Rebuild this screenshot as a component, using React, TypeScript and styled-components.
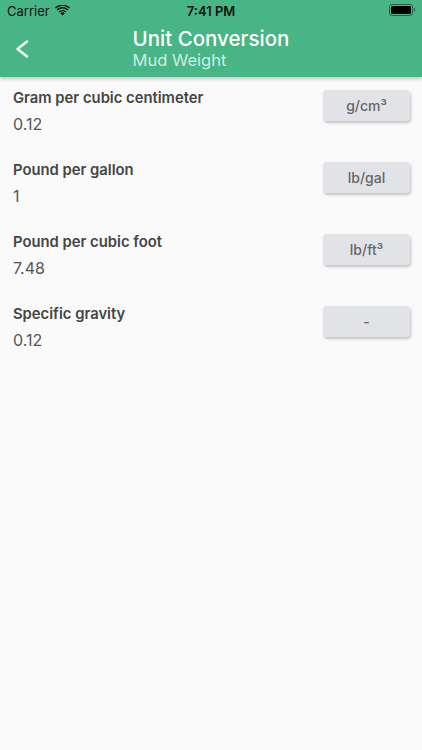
import styled, { createGlobalStyle } from "styled-components";

const GlobalStyle = createGlobalStyle`
  html, body {
    margin: 0;
    padding: 0;
    background: #fafafa;
  }
  body {
    font-family: Inter, "Noto Sans", sans-serif;
    -webkit-font-smoothing: antialiased;
  }
`;

const conversions = [
  { id: "gcc", label: "Gram per cubic centimeter", value: "0.12", unit: "g/cm³" },
  { id: "ppg", label: "Pound per gallon", value: "1", unit: "lb/gal" },
  { id: "pcf", label: "Pound per cubic foot", value: "7.48", unit: "lb/ft³" },
  { id: "sg", label: "Specific gravity", value: "0.12", unit: "-" },
];

const Screen = styled.div`
  width: 422px;
  min-height: 750px;
  background: #fafafa;
`;

const Header = styled.header`
  background: #47b585;
  box-shadow: 0 2px 4px rgba(0, 0, 0, 0.22);
  position: relative;
  z-index: 1;
`;

const StatusBar = styled.div`
  height: 20px;
  display: grid;
  grid-template-columns: 1fr auto 1fr;
  align-items: center;
  padding: 0 7px;
  color: #111;
  font-size: 13px;
`;

const Carrier = styled.div`
  display: flex;
  align-items: center;
  gap: 5px;
  padding-top: 1px;
`;

const Clock = styled.div`
  font-weight: 600;
  padding-top: 1px;
`;

const Battery = styled.div`
  justify-self: end;
  display: flex;
  align-items: center;
`;

const BatteryBody = styled.div`
  width: 20px;
  height: 8px;
  border: 1px solid rgba(0, 0, 0, 0.45);
  border-radius: 3px;
  padding: 1px;
  box-sizing: content-box;

  &::after {
    content: "";
    display: block;
    width: 100%;
    height: 100%;
    border-radius: 1.5px;
    background: #000;
  }
`;

const BatteryTip = styled.div`
  width: 1.5px;
  height: 4px;
  margin-left: 1px;
  border-radius: 0 1px 1px 0;
  background: rgba(0, 0, 0, 0.45);
`;

const NavBar = styled.div`
  height: 57px;
  display: grid;
  grid-template-columns: 56px 1fr 56px;
`;

const BackButton = styled.button`
  border: 0;
  background: transparent;
  padding: 0 0 0 14px;
  height: 57px;
  display: flex;
  align-items: center;
  cursor: pointer;
`;

const TitleBlock = styled.div`
  justify-self: center;
  display: flex;
  flex-direction: column;
  padding-top: 7px;
`;

const Title = styled.div`
  color: #fff;
  font-size: 20.5px;
  line-height: 24px;
  font-weight: 500;
`;

const Subtitle = styled.div`
  color: rgba(255, 255, 255, 0.75);
  font-size: 16.5px;
  line-height: 19px;
`;

const List = styled.div`
  padding: 12px 12px 0 13px;
`;

const Row = styled.div`
  height: 72px;
  display: flex;
  justify-content: space-between;
  align-items: flex-start;
`;

const RowText = styled.div`
  display: flex;
  flex-direction: column;
`;

const Label = styled.div`
  color: #454545;
  font-size: 14.8px;
  line-height: 18px;
  font-weight: 600;
`;

const Value = styled.div`
  margin-top: 7px;
  color: #555;
  font-size: 16px;
  line-height: 20px;
`;

const UnitButton = styled.button`
  margin-top: 1px;
  width: 87px;
  height: 31px;
  border: 0;
  border-radius: 4px;
  background: #e1e3e7;
  color: #666;
  font-family: Inter, "Noto Sans", sans-serif;
  font-size: 14px;
  font-weight: 500;
  box-shadow: 1px 2px 3px rgba(0, 0, 0, 0.22);
  cursor: pointer;
`;

function WifiIcon() {
  return (
    <svg width="15" height="11" viewBox="0 0 15 11">
      <path d="M7.5 10.6 L5.3 8.2 A3.2 3.2 0 0 1 9.7 8.2 Z" fill="#111" />
      <path d="M3.6 6.5 A5.6 5.6 0 0 1 11.4 6.5 L10.3 7.6 A4 4 0 0 0 4.7 7.6 Z" fill="#111" />
      <path d="M1.6 4.4 A8.5 8.5 0 0 1 13.4 4.4 L12.3 5.5 A7 7 0 0 0 2.7 5.5 Z" fill="#111" />
      <path d="M0 2.6 A10.8 10.8 0 0 1 15 2.6 L14.1 3.5 A9.5 9.5 0 0 0 0.9 3.5 Z" fill="#111" />
    </svg>
  );
}

function ChevronLeft() {
  return (
    <svg width="16" height="20" viewBox="0 0 16 20">
      <polyline points="13,2.5 3.5,10 13,17.5" fill="none" stroke="#fff" strokeWidth="2.4" strokeLinecap="round" strokeLinejoin="round" />
    </svg>
  );
}

export default function App() {
  return (
    <Screen>
      <GlobalStyle />
      <Header>
        <StatusBar>
          <Carrier>
            Carrier
            <WifiIcon />
          </Carrier>
          <Clock>7:41 PM</Clock>
          <Battery>
            <BatteryBody />
            <BatteryTip />
          </Battery>
        </StatusBar>
        <NavBar>
          <BackButton type="button" aria-label="Back">
            <ChevronLeft />
          </BackButton>
          <TitleBlock>
            <Title>Unit Conversion</Title>
            <Subtitle>Mud Weight</Subtitle>
          </TitleBlock>
        </NavBar>
      </Header>

      <List>
        {conversions.map((item) => (
          <Row key={item.id}>
            <RowText>
              <Label>{item.label}</Label>
              <Value>{item.value}</Value>
            </RowText>
            <UnitButton type="button">{item.unit}</UnitButton>
          </Row>
        ))}
      </List>
    </Screen>
  );
}
